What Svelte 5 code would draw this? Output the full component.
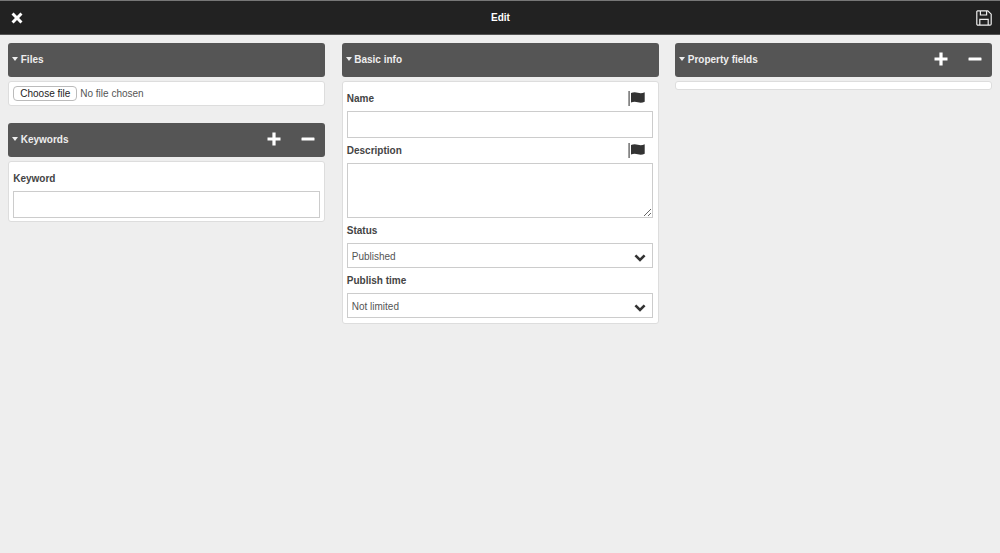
<script lang="ts">
  const statuses = ['Published', 'Draft', 'Hidden'];
  const times = ['Not limited', 'Limited'];

  let status = $state('Published');
  let publishTime = $state('Not limited');
  let open = $state({ files: true, keywords: true, basic: true, props: true });
</script>

{#snippet plusMinus()}
  <div class="actions">
    <button type="button" class="icon-btn" aria-label="Add">
      <svg viewBox="0 0 14 14" width="14" height="14"><path d="M5.4 0.5h3.2v4.9h4.9v3.2H8.6v4.9H5.4V8.6H0.5V5.4h4.9z" fill="currentColor" /></svg>
    </button>
    <button type="button" class="icon-btn" aria-label="Remove">
      <svg viewBox="0 0 14 14" width="14" height="14"><rect x="0.5" y="5.4" width="13" height="3.2" rx="0.6" fill="currentColor" /></svg>
    </button>
  </div>
{/snippet}

{#snippet flag()}
  <svg class="flag" viewBox="0 0 18 15" width="18" height="15" aria-hidden="true">
    <rect x="0.4" y="0" width="1.4" height="15" fill="#666" />
    <path d="M3 2c2.4-1.2 4.8-1 6.8-.3 2.2.7 4.4.7 6.9-.5v9.600c-2.500 1.200-4.700 1.200-6.900.5-2-.7-4.400-.9-6.800.3z" fill="#333" />
  </svg>
{/snippet}

{#snippet chevron()}
  <svg class="chevron" viewBox="0 0 12 8" width="12" height="8" aria-hidden="true">
    <path d="M1.4 1.4 6 6l4.6-4.6" fill="none" stroke="#333" stroke-width="2.6" />
  </svg>
{/snippet}

{#snippet heading(title: string, key: 'files' | 'keywords' | 'basic' | 'props', withActions: boolean)}
  <header class="panel-head">
    <button type="button" class="toggle" onclick={() => (open[key] = !open[key])}>
      <span class="caret"></span>{title}
    </button>
    {#if withActions}
      {@render plusMinus()}
    {/if}
  </header>
{/snippet}

<div class="page">
  <div class="topbar">
    <button type="button" class="bar-btn" aria-label="Close">
      <svg viewBox="0 0 12 12" width="12" height="12"><path d="M2.6.5 6 3.9 9.4.5 11.500 2.600 8.100 6l3.400 3.400-2.100 2.100L6 8.100l-3.400 3.400L.5 9.400 3.900 6 .5 2.600z" fill="#fff" /></svg>
    </button>
    <span class="title">Edit</span>
    <button type="button" class="bar-btn" aria-label="Save">
      <svg viewBox="0 0 16 16" width="16" height="16" fill="none" stroke="#eee" stroke-width="1.2"><path d="M1.6.8h10.2l3.400 3.400v9.800a1.200 1.200 0 0 1-1.200 1.200H2a1.200 1.200 0 0 1-1.200-1.200V1.600z" /><path d="M4.400 1v4h6.200V1" /><path d="M3.800 15V9.400h8.400V15" /></svg>
    </button>
  </div>

  <main class="columns">
    <section class="column">
      <div class="panel">
        {@render heading('Files', 'files', false)}
        {#if open.files}
          <div class="panel-body file-body">
            <button type="button" class="file-btn">Choose file</button>
            <span class="file-name">No file chosen</span>
          </div>
        {/if}
      </div>

      <div class="panel">
        {@render heading('Keywords', 'keywords', true)}
        {#if open.keywords}
          <div class="panel-body keyword-body">
            <label class="field-label" for="keyword">Keyword</label>
            <input id="keyword" type="text" class="keyword-input" />
          </div>
        {/if}
      </div>
    </section>

    <section class="column">
      <div class="panel">
        {@render heading('Basic info', 'basic', false)}
        {#if open.basic}
          <div class="panel-body form-body">
            <div class="label-row">
              <label class="field-label" for="name">Name</label>
              {@render flag()}
            </div>
            <input id="name" type="text" class="name-input" />

            <div class="label-row">
              <label class="field-label" for="description">Description</label>
              {@render flag()}
            </div>
            <textarea id="description"></textarea>

            <div class="label-row">
              <label class="field-label" for="status">Status</label>
            </div>
            <div class="select-wrap">
              <select id="status" bind:value={status}>
                {#each statuses as s}
                  <option>{s}</option>
                {/each}
              </select>
              {@render chevron()}
            </div>

            <div class="label-row">
              <label class="field-label" for="publish">Publish time</label>
            </div>
            <div class="select-wrap">
              <select id="publish" bind:value={publishTime}>
                {#each times as t}
                  <option>{t}</option>
                {/each}
              </select>
              {@render chevron()}
            </div>
          </div>
        {/if}
      </div>
    </section>

    <section class="column">
      <div class="panel">
        {@render heading('Property fields', 'props', true)}
        {#if open.props}
          <div class="panel-body empty-body"></div>
        {/if}
      </div>
    </section>
  </main>
</div>

<style>
  :global(body) {
    margin: 0;
    background: #eeeeee;
    font-family: 'Liberation Sans', Arial, sans-serif;
    font-size: 10px;
    color: #333;
  }

  .page {
    min-height: 553px;
    background: #eeeeee;
  }

  .topbar {
    display: flex;
    align-items: center;
    justify-content: space-between;
    box-sizing: border-box;
    height: 35px;
    padding: 0 8px 0 11px;
    background: #222222;
    border-top: 1px solid #777;
    border-bottom: 1px solid #555;
    color: #fff;
  }

  .title {
    margin-left: 2px;
    font-size: 10px;
    font-weight: bold;
  }

  .bar-btn {
    display: flex;
    padding: 0;
    border: none;
    background: none;
    cursor: pointer;
  }

  .columns {
    display: grid;
    grid-template-columns: repeat(3, 317px);
    column-gap: 16.5px;
    padding: 8px 8.25px 0;
  }

  .column {
    display: flex;
    flex-direction: column;
    gap: 17px;
  }

  .panel-head {
    display: flex;
    align-items: center;
    justify-content: space-between;
    box-sizing: border-box;
    height: 34px;
    padding: 0 10px 2px 4px;
    background: #555555;
    border-radius: 3px;
    color: #eee;
  }

  .toggle {
    display: flex;
    align-items: center;
    padding: 0;
    border: none;
    background: none;
    color: inherit;
    font: bold 10px 'Liberation Sans', Arial, sans-serif;
    cursor: pointer;
  }

  .caret {
    width: 0;
    height: 0;
    margin-right: 2.5px;
    border-left: 3.5px solid transparent;
    border-right: 3.5px solid transparent;
    border-top: 4px solid #eee;
  }

  .actions {
    display: flex;
    gap: 20px;
  }

  .icon-btn {
    display: flex;
    padding: 0;
    border: none;
    background: none;
    color: #fff;
    cursor: pointer;
  }

  .panel-body {
    box-sizing: border-box;
    margin-top: 4px;
    background: #fff;
    border: 1px solid #dddddd;
    border-radius: 3px;
  }

  .file-body {
    display: flex;
    align-items: center;
    height: 25px;
    padding: 0 4px;
  }

  .file-btn {
    box-sizing: border-box;
    height: 15px;
    padding: 0 6px;
    margin-right: 3px;
    background: #fff;
    border: 1px solid #bbb;
    border-radius: 4px;
    color: #222;
    font: 10px 'Liberation Sans', Arial, sans-serif;
  }

  .file-name {
    color: #555;
  }

  .keyword-body {
    padding: 0 4px 3px;
  }

  .keyword-body .field-label {
    display: block;
    padding-top: 11px;
    margin-bottom: 6px;
  }

  .field-label {
    font-weight: bold;
    color: #444;
    line-height: 12px;
  }

  .form-body {
    padding: 4px 5px 5px 4px;
  }

  .label-row {
    display: flex;
    align-items: center;
    justify-content: space-between;
    height: 25px;
    padding-right: 7px;
  }

  input,
  textarea,
  select {
    display: block;
    box-sizing: border-box;
    width: 100%;
    margin: 0;
    background: #fff;
    border: 1px solid #cccccc;
    border-radius: 0;
    outline: none;
    color: #555;
    font: 10px 'Liberation Sans', Arial, sans-serif;
  }

  .keyword-input {
    height: 27px;
  }

  .name-input {
    height: 27px;
  }

  textarea {
    height: 55px;
    resize: vertical;
  }

  .select-wrap {
    position: relative;
  }

  select {
    height: 25px;
    padding: 2px 24px 0 4px;
    appearance: none;
  }

  .chevron {
    position: absolute;
    top: 10.5px;
    right: 7px;
    pointer-events: none;
  }

  .empty-body {
    height: 9px;
  }
</style>
